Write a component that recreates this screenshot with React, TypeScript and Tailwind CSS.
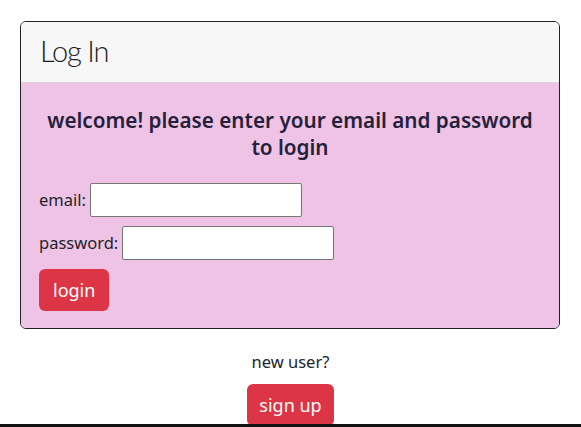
export default function App() {
  return (
    <div className="min-h-screen bg-white font-['Noto_Sans',sans-serif] text-[#212529]">
      <div className="mx-5 pt-[21px]">
        {/* Card */}
        <div className="w-[540px] overflow-hidden rounded-md border border-[#222]">
          <div className="h-[61px] border-b border-[#d6d6d6] bg-[#f7f7f7] px-[19px] pt-[9px]">
            <h1 className="font-['Lato',sans-serif] text-[29px] font-light leading-[40px] tracking-[-1.2px] text-[#1b1b22]">
              Log In
            </h1>
          </div>
          <div className="bg-[#efc3e6] px-[18px] pt-[24px] pb-[17px]">
            <h2 className="mb-[22px] text-center text-[20.7px] font-semibold leading-[27px] text-[#25213a]">
              welcome! please enter your email and password to login
            </h2>
            <div className="flex flex-col gap-[9px]">
              <label className="flex items-center gap-[4px] text-[16.5px]">
                <span>email:</span>
                <input
                  type="email"
                  className="h-[34px] w-[212px] rounded-[2px] border border-[#767676] bg-white"
                />
              </label>
              <label className="flex items-center gap-[4px] text-[16.5px]">
                <span>password:</span>
                <input
                  type="password"
                  className="h-[34px] w-[212px] rounded-[2px] border border-[#767676] bg-white"
                />
              </label>
              <div>
                <button className="h-[42px] rounded-md bg-[#dc3545] px-[14px] text-[18px] text-white">
                  login
                </button>
              </div>
            </div>
          </div>
        </div>

        {/* Sign up */}
        <div className="mt-[21px] flex flex-col items-center gap-[10px]">
          <p className="text-[16.5px] leading-[24px]">new user?</p>
          <button className="h-[42px] rounded-md bg-[#dc3545] px-[12px] text-[18px] text-white">
            sign up
          </button>
        </div>
      </div>
      <div className="fixed bottom-0 left-0 h-[3px] w-full bg-[#111]" />
    </div>
  );
}
